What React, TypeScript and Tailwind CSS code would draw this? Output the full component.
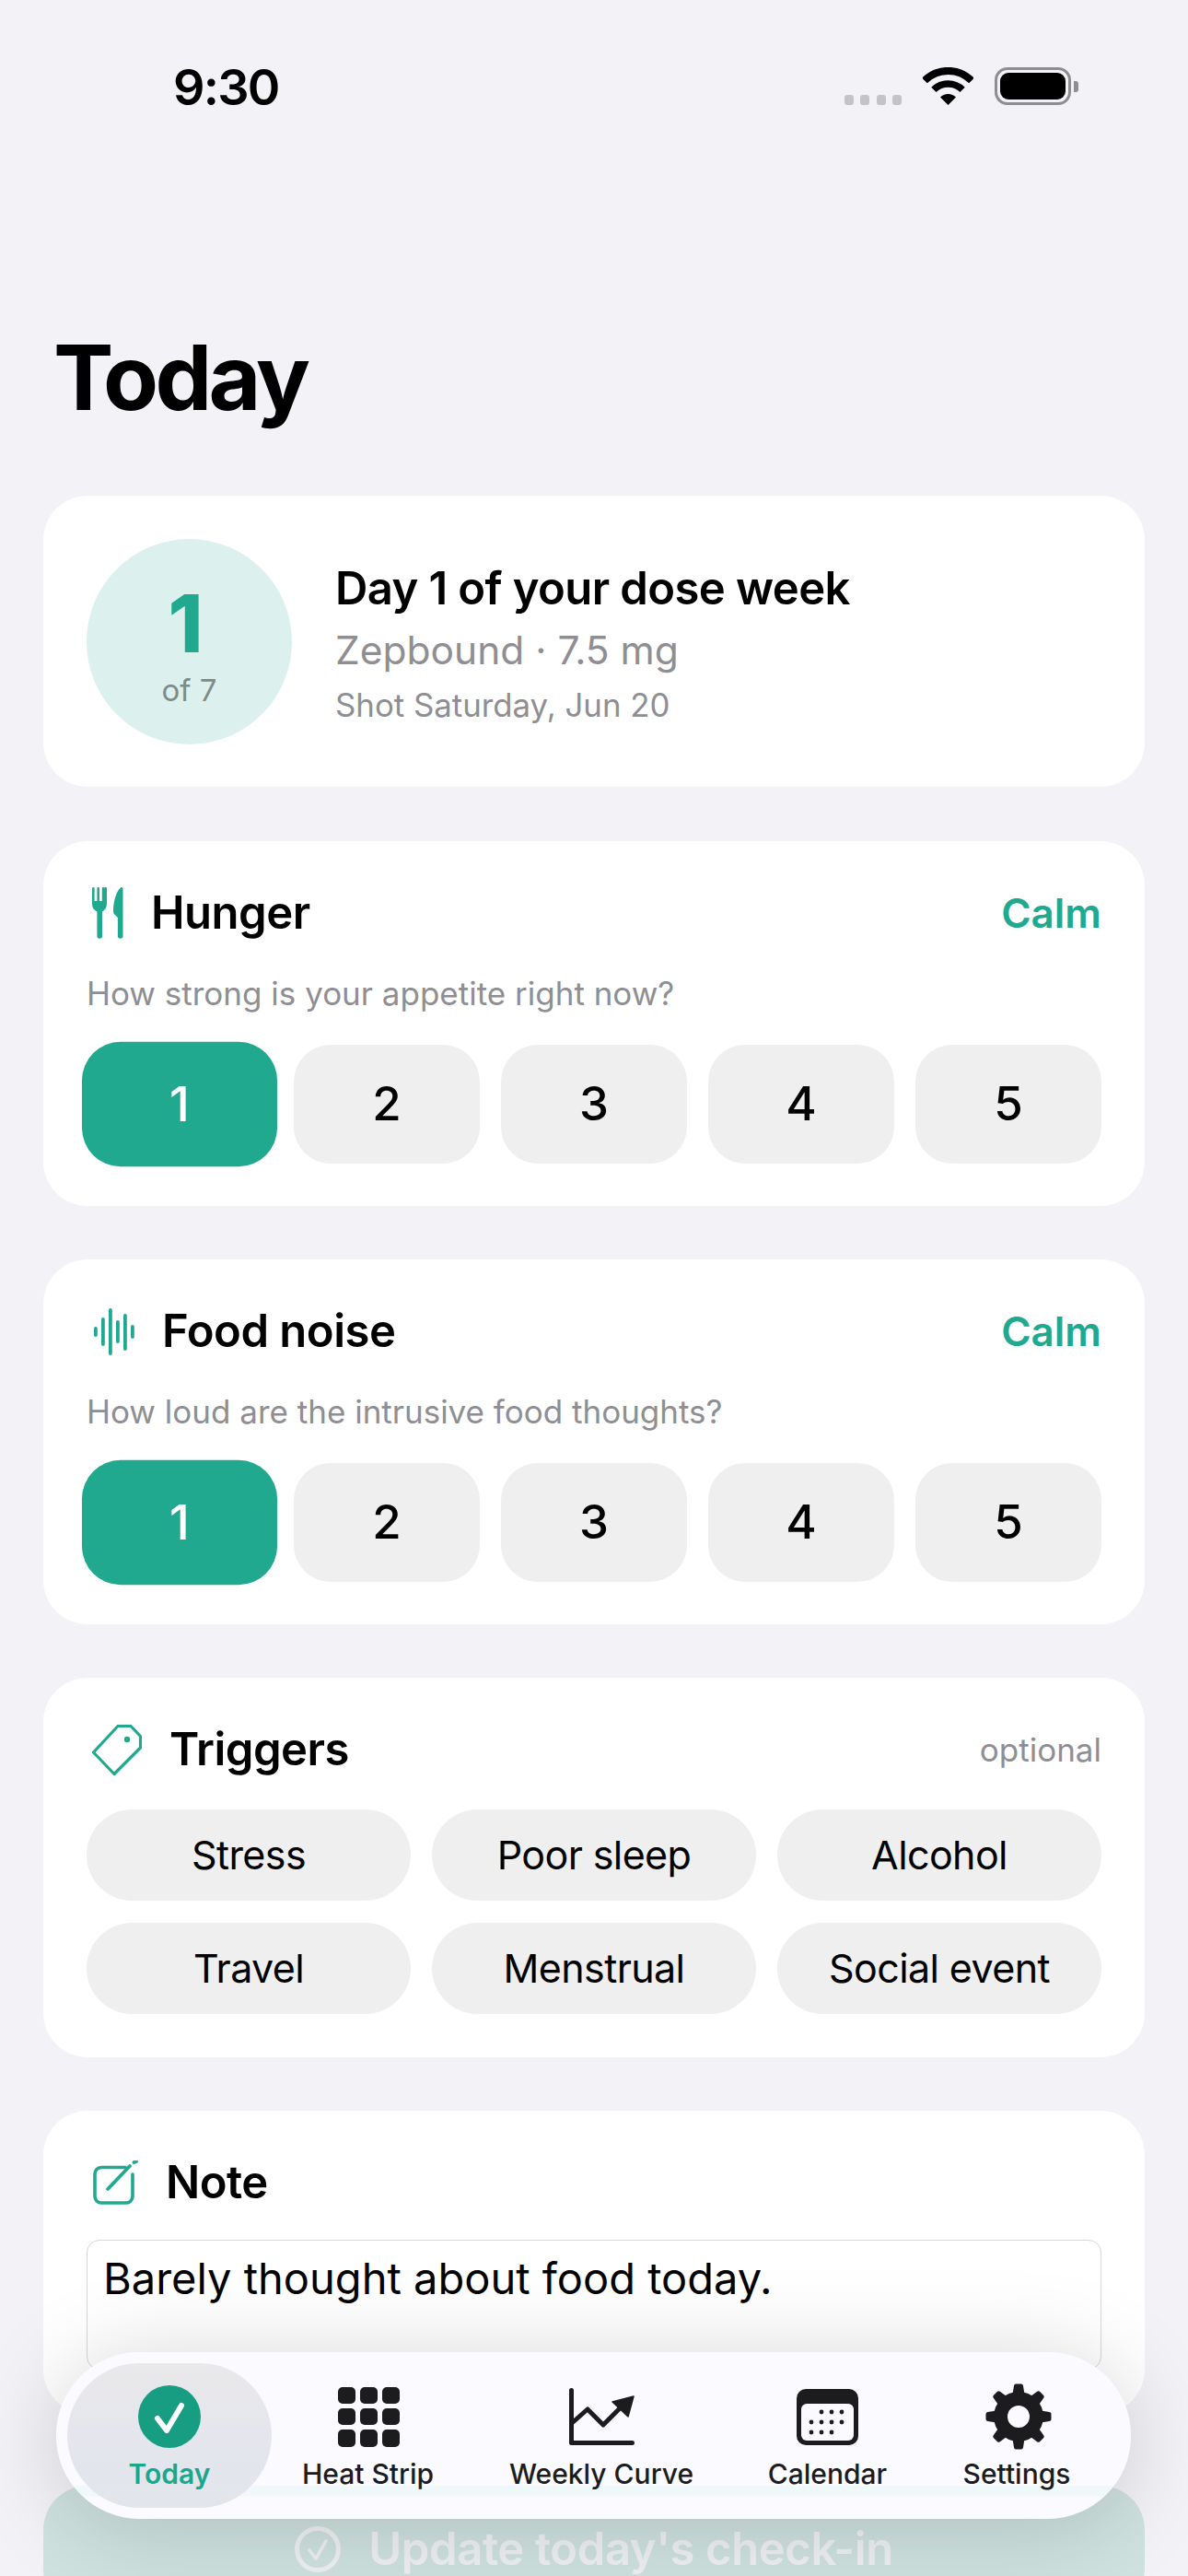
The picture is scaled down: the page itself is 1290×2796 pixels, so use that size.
import type { ReactNode } from 'react';

const SCALE = [1, 2, 3, 4, 5];
const TRIGGERS = ['Stress', 'Poor sleep', 'Alcohol', 'Travel', 'Menstrual', 'Social event'];

function Wifi() {
  return (
    <svg width="55" height="41" viewBox="0 0 55 41" fill="none">
      <path d="M2 14.5A36 36 0 0 1 53 14.5" stroke="#000" strokeWidth="8" />
      <path d="M11.9 24.4A22 22 0 0 1 43.1 24.4" stroke="#000" strokeWidth="7.5" />
      <path d="M27.5 41L19 32.5A12 12 0 0 1 36 32.5Z" fill="#000" />
    </svg>
  );
}

function Battery() {
  return (
    <div className="flex items-center gap-[3px]">
      <div className="w-[83px] h-[41px] rounded-[14px] border-[3px] border-[#8e8e90] p-[3px]">
        <div className="w-full h-full rounded-[9px] bg-black" />
      </div>
      <div className="w-[5px] h-[12px] rounded-r-[3px] bg-[#8e8e90]" />
    </div>
  );
}

function ForkKnife() {
  return (
    <svg width="34" height="56" viewBox="0 0 34 56" fill="#20a98e">
      <path d="M0 1.2a1.2 1.2 0 0 1 2.6 0V15h2.8V1.2a1.2 1.2 0 0 1 2.6 0V15h2.8V1.2a1.2 1.2 0 0 1 2.6 0V15h0V1.2a1.2 1.2 0 0 1 2.6 0V18c0 4-2 7-5 8.5V53a2.8 2.8 0 0 1-5.6 0V26.500C2 25 0 22 0 18Z" />
      <path d="M33.500 2V53a2.800 2.800 0 0 1-5.600 0V33l-3.500-3.500C23.400 28.500 23 27 23 25 23 15 27 3 31 .4 32.500-.4 33.500.5 33.500 2Z" />
    </svg>
  );
}

function Waveform() {
  const bars = [
    { x: 2, y: 20, h: 11 },
    { x: 10, y: 10, h: 31 },
    { x: 18, y: 0, h: 51 },
    { x: 26, y: 13, h: 25 },
    { x: 34, y: 6, h: 40 },
    { x: 42, y: 18, h: 15 },
  ];
  return (
    <svg width="46" height="51" viewBox="0 0 46 51" fill="#20a98e">
      {bars.map((b) => (
        <rect key={b.x} x={b.x} y={b.y} width="3.800" height={b.h} rx="1.900" />
      ))}
    </svg>
  );
}

function TagIcon() {
  return (
    <svg width="54" height="55" viewBox="0 0 54 55" fill="none">
      <path
        d="M28 1.500H42L52.500 12.500V25L24 53.500 1.500 30Z"
        stroke="#20a98e"
        strokeWidth="3.200"
        strokeLinejoin="round"
      />
      <circle cx="38" cy="16" r="3.200" fill="#20a98e" />
    </svg>
  );
}

function NoteIcon() {
  return (
    <svg width="50" height="48" viewBox="0 0 50 48" fill="none" stroke="#20a98e" strokeWidth="3.600" strokeLinecap="round">
      <path d="M36 7.500H10a7 7 0 0 0-7 7V39a7 7 0 0 0 7 7h27a7 7 0 0 0 7-7V15" />
      <path d="M17 31L41 6" strokeWidth="3.800" />
      <path d="M45.500 2L48 1" strokeWidth="3.800" />
    </svg>
  );
}

function CheckCircle({ size, color }: { size: number; color: string }) {
  return (
    <svg width={size} height={size} viewBox="0 0 50 50" fill="none" stroke={color}>
      <circle cx="25" cy="25" r="22.500" strokeWidth="5" />
      <path d="M16 26l7 9 11-19" strokeWidth="3.500" strokeLinecap="round" strokeLinejoin="round" />
    </svg>
  );
}

function TodayIcon() {
  return (
    <svg width="68" height="68" viewBox="0 0 68 68" fill="none">
      <circle cx="34" cy="34" r="34" fill="#169d82" />
      <path d="M21 36l10 13 16-27" stroke="#fff" strokeWidth="6" strokeLinecap="round" strokeLinejoin="round" />
    </svg>
  );
}

function GridIcon() {
  const cells = [0, 1, 2, 3, 4, 5, 6, 7, 8];
  return (
    <div className="grid grid-cols-3 gap-[5px] w-[67px] h-[65px] ml-[2px]">
      {cells.map((c) => (
        <div key={c} className="rounded-[5px] bg-[#1c1c1e]" />
      ))}
    </div>
  );
}

function ChartIcon() {
  return (
    <svg width="71" height="62" viewBox="0 0 71 62" fill="none" stroke="#1c1c1e" strokeLinecap="round" strokeLinejoin="round">
      <path d="M2.500 2.500V59.500H68.500" strokeWidth="5" />
      <path d="M3 38L20 23 37 40 56 21" strokeWidth="5" />
      <path d="M47 15L70 9 64 31Z" fill="#1c1c1e" strokeWidth="1.500" />
    </svg>
  );
}

function CalendarIcon() {
  const dots = [
    [27, 25], [38, 25], [49, 25],
    [16, 36], [27, 36], [38, 36], [49, 36],
    [16, 47], [27, 47], [38, 47],
  ];
  return (
    <svg width="67" height="61" viewBox="0 0 67 61">
      <rect width="67" height="61" rx="10" fill="#1c1c1e" />
      <rect x="5" y="16" width="57" height="40" rx="6" fill="#fafaff" />
      {dots.map(([x, y]) => (
        <circle key={`${x}-${y}`} cx={x} cy={y} r="2.400" fill="#1c1c1e" />
      ))}
    </svg>
  );
}

function GearIcon() {
  const teeth = [0, 45, 90, 135, 180, 225, 270, 315];
  return (
    <svg width="72" height="72" viewBox="0 0 72 72" className="ml-[3px]">
      <circle cx="36" cy="36" r="27" fill="#1c1c1e" />
      {teeth.map((t) => (
        <path key={t} d="M29.500 12L31 2.500Q31.300 .500 33 .500H39Q40.700 .500 41 2.500L42.500 12Z" fill="#1c1c1e" transform={`rotate(${t} 36 36)`} />
      ))}
      <circle cx="36" cy="36" r="12" fill="#fafaff" />
    </svg>
  );
}

function Card({ icon, title, right, children, className }: { icon: ReactNode; title: string; right?: ReactNode; children: ReactNode; className: string }) {
  return (
    <section className={`rounded-[48px] bg-white px-[47px] pt-[47px] ${className}`}>
      <div className="flex items-center h-[62px]">
        <div className="flex items-center gap-[30px] pl-[6px]">
          {icon}
          <h2 className="text-[49px] leading-[62px] font-semibold text-black tracking-[-0.5px]">{title}</h2>
        </div>
        <div className="ml-auto">{right}</div>
      </div>
      {children}
    </section>
  );
}

function ScaleCard({ icon, title, hint }: { icon: ReactNode; title: string; hint: string }) {
  return (
    <Card icon={icon} title={title} className="h-[396px]" right={<span className="text-[44px] font-semibold text-[#20a98e]">Calm</span>}>
      <p className="mt-[32px] mb-[32px] text-[35px] leading-[48px] text-[#8e8e93]">{hint}</p>
      <div className="grid grid-cols-5 gap-[23px]">
        {SCALE.map((n) => (
          <div
            key={n}
            className={
              n === 1
                ? 'h-[129px] rounded-[40px] bg-[#20a98e] scale-105 flex items-center justify-center text-[50px] font-medium text-white'
                : 'h-[129px] rounded-[40px] bg-[#efefef] flex items-center justify-center text-[51px] font-medium text-black'
            }
          >
            {n}
          </div>
        ))}
      </div>
    </Card>
  );
}

function TabBar() {
  return (
    <nav className="absolute left-[61px] top-[2553px] w-[1167px] h-[181px] rounded-full pl-[12px] py-[12px] flex bg-[linear-gradient(180deg,#fbfbff_0%,#fafaff_80%,#eff8fa_80.5%,#f1f8fb_86%,#fafaff_87%,#fafaff_100%)] shadow-[0_8px_100px_rgba(0,0,0,0.17)]">
      <Tab className="w-[222px] rounded-[79px] bg-[linear-gradient(180deg,#e9e9ea_0%,#e4e5ee_60%,#e2e6ea_100%)]" label="Today" active icon={<TodayIcon />} />
      <Tab className="w-[209px]" label="Heat Strip" icon={<GridIcon />} />
      <Tab className="w-[298px]" label="Weekly Curve" icon={<ChartIcon />} />
      <Tab className="w-[193px]" label="Calendar" icon={<CalendarIcon />} />
      <Tab className="w-[218px]" label="Settings" icon={<GearIcon />} />
    </nav>
  );
}

function Tab({ className, label, icon, active }: { className: string; label: string; icon: ReactNode; active?: boolean }) {
  return (
    <div className={`flex flex-col items-center ${className}`}>
      <div className="h-[72px] mt-[22px] flex items-center justify-center">{icon}</div>
      <span className={active ? 'mt-[6px] text-[30px] leading-[40px] font-semibold text-[#1ba78b]' : 'mt-[6px] text-[30px] leading-[40px] font-medium text-[#1c1c1e]'}>
        {label}
      </span>
    </div>
  );
}

export default function App() {
  return (
    <div className="relative w-[1290px] h-[2796px] overflow-hidden bg-[#f2f2f7] font-['Inter',sans-serif]">
      <header className="h-[365px]">
        <div className="flex items-start pt-[73px] pl-[188px] pr-[119px]">
          <span className="text-[54px] leading-[44px] font-semibold text-black tracking-[-1.8px]">9:30</span>
          <div className="ml-auto flex items-end gap-[23px]">
            <div className="flex gap-[7.500px]">
              {[0, 1, 2, 3].map((i) => (
                <div key={i} className="w-[10px] h-[11px] rounded-[3px] bg-[#c3c3c8]" />
              ))}
            </div>
            <Wifi />
            <Battery />
          </div>
        </div>
      </header>
      <main className="px-[47px]">
        <h1 className="pl-[11px] text-[98px] leading-[90px] font-bold text-black tracking-[-3.7px]">Today</h1>
        <section className="mt-[83px] h-[316px] rounded-[48px] bg-white p-[47px] flex items-center gap-[47px]">
          <div className="w-[223px] h-[223px] shrink-0 rounded-full bg-[#dcf1ed] flex flex-col items-center">
            <span className="mt-[42px] pr-[8px] text-[86px] leading-[100px] font-extrabold text-[#20a98e]">1</span>
            <span className="mt-[2px] text-[33px] leading-[40px] text-[#7f8b89]">of 7</span>
          </div>
          <div className="pt-[3px]">
            <p className="text-[49px] leading-[60px] font-semibold text-black tracking-[-0.6px]">Day 1 of your dose week</p>
            <p className="mt-[10px] text-[42.500px] leading-[54px] text-[#8e8e93]">Zepbound · 7.5 mg</p>
            <p className="mt-[10px] text-[34.800px] leading-[44px] text-[#8e8e93]">Shot Saturday, Jun 20</p>
          </div>
        </section>

        <div className="mt-[59px] flex flex-col gap-[58px]">
          <ScaleCard icon={<ForkKnife />} title="Hunger" hint="How strong is your appetite right now?" />
          <ScaleCard icon={<Waveform />} title="Food noise" hint="How loud are the intrusive food thoughts?" />
          <Card icon={<TagIcon />} title="Triggers" className="h-[412px]" right={<span className="text-[35px] text-[#8e8e93]">optional</span>}>
            <div className="mt-[34px] grid grid-cols-3 gap-x-[23px] gap-y-[24px]">
              {TRIGGERS.map((t) => (
                <div key={t} className="h-[99px] rounded-full bg-[#efefef] flex items-center justify-center text-[43px] tracking-[-0.6px] text-black">
                  {t}
                </div>
              ))}
            </div>
          </Card>
          <Card icon={<NoteIcon />} title="Note" className="h-[329px]">
            <div className="mt-[31px] h-[141px] rounded-[14px] border border-[#d6d6d8] px-[17px] py-[11px] text-[47px] leading-[60px] text-black">
              Barely thought about food today.
            </div>
          </Card>
        </div>

        <div className="mt-[78px] h-[138px] rounded-[48px] bg-[#cfe2df] flex items-center justify-center gap-[30px]">
          <CheckCircle size={50} color="#eff0f3" />
          <span className="text-[49px] leading-[50px] font-semibold tracking-[-0.4px] text-[#eff0f3]">Update today's check-in</span>
        </div>
      </main>
      <TabBar />
    </div>
  );
}
